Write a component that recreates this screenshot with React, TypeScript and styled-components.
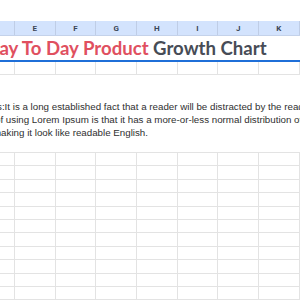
import React from "react";
import styled, { createGlobalStyle } from "styled-components";

const GlobalStyle = createGlobalStyle`
  html, body {
    margin: 0;
    padding: 0;
    background: #ffffff;
    overflow: hidden;
  }
`;

const COLS = ["", "E", "F", "G", "H", "I", "J", "K"];
const FIRST = 15;
const COL_W = 40.67;

const colWidth = (i: number) => (i === 0 ? FIRST : COL_W);

const Sheet = styled.div`
  width: 300px;
  height: 300px;
  overflow: hidden;
  display: flex;
  flex-direction: column;
  font-family: "Liberation Sans", Arial, sans-serif;
`;

const Toolbar = styled.div`
  height: 21px;
  flex-shrink: 0;
  background: #ffffff;
`;

const HeaderRow = styled.div`
  display: flex;
  height: 15px;
  flex-shrink: 0;
  background: #d3e3fd;
  border-bottom: 1px solid #c4d2ea;
  box-sizing: border-box;
`;

const HeaderCell = styled.div<{ $w: number }>`
  width: ${(p) => p.$w}px;
  flex-shrink: 0;
  box-sizing: border-box;
  border-right: 1px solid #bfcde6;
  display: flex;
  align-items: center;
  justify-content: center;
  font-family: Roboto, "Liberation Sans", sans-serif;
  font-weight: 700;
  font-size: 8px;
  color: #3b4556;
`;

const TitleRow = styled.div`
  height: 26px;
  flex-shrink: 0;
  box-sizing: border-box;
  border-bottom: 2px solid #1f6fd8;
  display: flex;
  align-items: center;
  white-space: nowrap;
  overflow: hidden;
`;

const Title = styled.div`
  margin-left: -14.5px;
  font-family: Lato, "Open Sans", sans-serif;
  font-weight: 700;
  font-size: 18.6px;
`;

const Accent = styled.span`
  color: #e0505f;
`;

const Plain = styled.span`
  color: #474c56;
`;

const GridRow = styled.div<{ $h?: number }>`
  display: flex;
  height: ${(p) => p.$h ?? 13.4}px;
  flex-shrink: 0;
  box-sizing: border-box;
  border-bottom: 1px solid #e3e3e3;
`;

const GridCell = styled.div<{ $w: number }>`
  width: ${(p) => p.$w}px;
  flex-shrink: 0;
  box-sizing: border-box;
  border-right: 1px solid #e3e3e3;
`;

const NoteBlock = styled.div`
  height: 78px;
  flex-shrink: 0;
  box-sizing: border-box;
  border-bottom: 1px solid #e3e3e3;
  padding-top: 25px;
  overflow: hidden;
  white-space: nowrap;
  font-size: 9.75px;
  line-height: 13px;
  color: #2f2f2f;
`;

const NoteLine = styled.div<{ $shift: number }>`
  margin-left: ${(p) => p.$shift}px;
`;

const Row = ({ h }: { h?: number }) => (
  <GridRow $h={h}>
    {COLS.map((_, i) => (
      <GridCell key={i} $w={colWidth(i)} />
    ))}
  </GridRow>
);

const App = () => {
  return (
    <Sheet>
      <GlobalStyle />
      <Toolbar />
      <HeaderRow>
        {COLS.map((c, i) => (
          <HeaderCell key={i} $w={colWidth(i)}>
            {c}
          </HeaderCell>
        ))}
      </HeaderRow>
      <TitleRow>
        <Title>
          <Accent>Day To Day Product </Accent>
          <Plain>Growth Chart</Plain>
        </Title>
      </TitleRow>
      <Row h={13} />
      <NoteBlock>
        <NoteLine $shift={-3}>
          s:It is a long established fact that a reader will be distracted by the readable content of a page.
        </NoteLine>
        <NoteLine $shift={-5}>
          of using Lorem Ipsum is that it has a more-or-less normal distribution of letters.
        </NoteLine>
        <NoteLine $shift={-7}>making it look like readable English.</NoteLine>
      </NoteBlock>
      {Array.from({ length: 11 }).map((_, i) => (
        <Row key={i} />
      ))}
    </Sheet>
  );
};

export default App;
